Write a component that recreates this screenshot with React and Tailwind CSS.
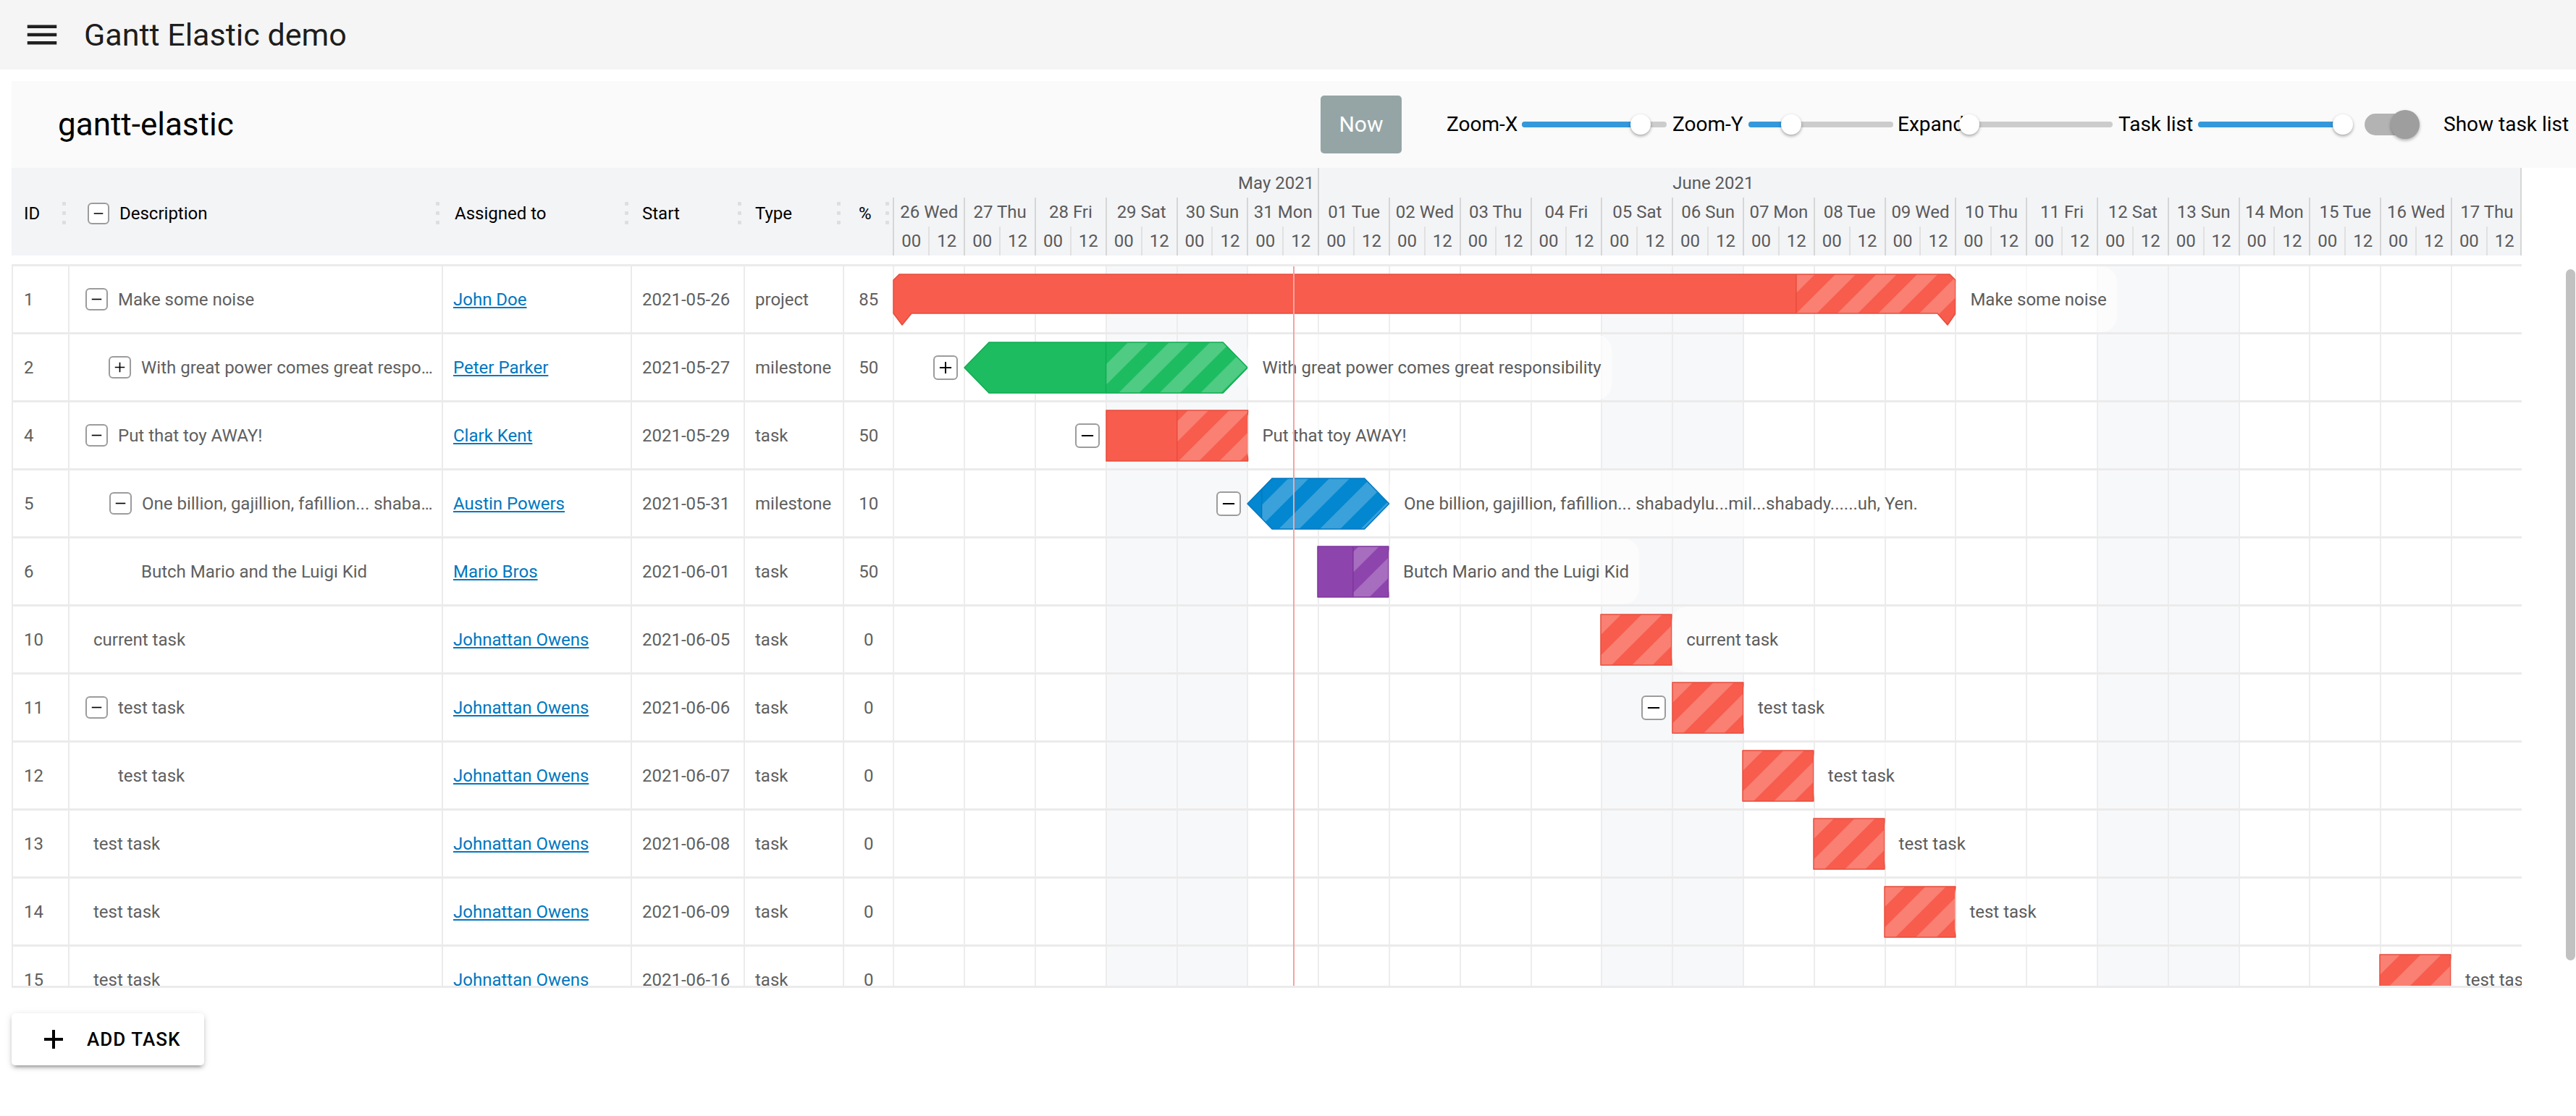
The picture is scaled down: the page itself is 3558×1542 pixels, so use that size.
import React from "react";

const DAY = 97.8;

const days = [
  "26 Wed", "27 Thu", "28 Fri", "29 Sat", "30 Sun", "31 Mon", "01 Tue", "02 Wed",
  "03 Thu", "04 Fri", "05 Sat", "06 Sun", "07 Mon", "08 Tue", "09 Wed", "10 Thu",
  "11 Fri", "12 Sat", "13 Sun", "14 Mon", "15 Tue", "16 Wed", "17 Thu",
];
const weekend = [3, 4, 10, 11, 17, 18];

const RED = { fill: "#F75C4C", stroke: "#E74C3C" };
const GREEN = { fill: "#1EBC61", stroke: "#0EAC51" };
const BLUE = { fill: "#0287D0", stroke: "#0077C0" };
const PURPLE = { fill: "#8E44AD", stroke: "#7E349D" };

const tasks = [
  { id: 1, label: "Make some noise", user: "John Doe", start: "2021-05-26", type: "project", pct: 85, ind: "pl-[22px]", exp: "minus", bar: { day: 0, dur: 15, kind: "project", ...RED } },
  { id: 2, label: "With great power comes great responsibility", user: "Peter Parker", start: "2021-05-27", type: "milestone", pct: 50, ind: "pl-[54px]", exp: "plus", chartExp: "plus", bar: { day: 1, dur: 4, kind: "milestone", ...GREEN } },
  { id: 4, label: "Put that toy AWAY!", user: "Clark Kent", start: "2021-05-29", type: "task", pct: 50, ind: "pl-[22px]", exp: "minus", chartExp: "minus", bar: { day: 3, dur: 2, kind: "task", ...RED } },
  { id: 5, label: "One billion, gajillion, fafillion... shabadylu...mil...shabady......uh, Yen.", user: "Austin Powers", start: "2021-05-31", type: "milestone", pct: 10, ind: "pl-[55px]", exp: "minus", chartExp: "minus", bar: { day: 5, dur: 2, kind: "milestone", ...BLUE } },
  { id: 6, label: "Butch Mario and the Luigi Kid", user: "Mario Bros", start: "2021-06-01", type: "task", pct: 50, ind: "pl-[99px]", bar: { day: 6, dur: 1, kind: "task", ...PURPLE } },
  { id: 10, label: "current task", user: "Johnattan Owens", start: "2021-06-05", type: "task", pct: 0, ind: "pl-[33px]", bar: { day: 10, dur: 1, kind: "task", ...RED } },
  { id: 11, label: "test task", user: "Johnattan Owens", start: "2021-06-06", type: "task", pct: 0, ind: "pl-[22px]", exp: "minus", chartExp: "minus", bar: { day: 11, dur: 1, kind: "task", ...RED } },
  { id: 12, label: "test task", user: "Johnattan Owens", start: "2021-06-07", type: "task", pct: 0, ind: "pl-[67px]", bar: { day: 12, dur: 1, kind: "task", ...RED } },
  { id: 13, label: "test task", user: "Johnattan Owens", start: "2021-06-08", type: "task", pct: 0, ind: "pl-[33px]", bar: { day: 13, dur: 1, kind: "task", ...RED } },
  { id: 14, label: "test task", user: "Johnattan Owens", start: "2021-06-09", type: "task", pct: 0, ind: "pl-[33px]", bar: { day: 14, dur: 1, kind: "task", ...RED } },
  { id: 15, label: "test task", user: "Johnattan Owens", start: "2021-06-16", type: "task", pct: 0, ind: "pl-[33px]", bar: { day: 21, dur: 1, kind: "task", ...RED } },
];

function Expander({ plus, box, mark }) {
  return (
    <span className={`flex shrink-0 items-center justify-center rounded-[6px] border-2 border-[#9c9c9c] bg-white ${box}`}>
      <svg width={mark} height={mark} viewBox="0 0 20 20">
        <path d={plus ? "M1 10H19M10 1V19" : "M1 10H19"} stroke="#000" strokeWidth="2.2" fill="none" />
      </svg>
    </span>
  );
}

function Grip() {
  return (
    <div className="mr-[5px] flex shrink-0 flex-col gap-[8px]">
      <span className="h-[5px] w-[5px] rounded-[1px] bg-[#dedede]" />
      <span className="h-[5px] w-[5px] rounded-[1px] bg-[#dedede]" />
      <span className="h-[5px] w-[5px] rounded-[1px] bg-[#dedede]" />
    </div>
  );
}

function Slider({ className, pos }) {
  return (
    <div className={`relative h-[28px] shrink-0 ${className}`}>
      <div className="absolute left-0 right-0 top-[10px] h-[8px] rounded-full bg-[#cccccc]" />
      <div className="absolute left-0 top-[10px] h-[8px] rounded-l-full bg-[#3498db]" style={{ width: pos }} />
      <div
        className="absolute top-0 h-[28px] w-[28px] rounded-full bg-white shadow-[0_2px_4px_rgba(0,0,0,0.35)]"
        style={{ left: pos - 14 }}
      />
    </div>
  );
}

function Bar({ bar, idx }) {
  const { kind, fill, stroke } = bar;
  const pct = bar.pct;
  const w = bar.dur * DAY;
  const h = 70;
  let d;
  if (kind === "milestone") d = `M34 0 H${w - 34} L${w} 35 L${w - 34} 70 H34 L0 35 Z`;
  else if (kind === "project") d = `M0 8 L8 0 H${w - 8} L${w} 8 V54 L${w - 11} 70 L${w - 25} 54 H25 L12 70 L0 54 Z`;
  else d = `M0 0 H${w} V70 H0 Z`;
  const px = (w * pct) / 100;
  const clip = `bar-clip-${idx}`;
  const pat = `bar-pat-${idx}`;
  return (
    <svg width={w} height={h} viewBox={`0 0 ${w} ${h}`} className="block shrink-0 overflow-visible">
      <defs>
        <clipPath id={clip}>
          <path d={d} />
        </clipPath>
        <pattern id={pat} width="40" height="40" patternUnits="userSpaceOnUse" patternTransform="rotate(45)">
          <rect width="20" height="40" fill="#ffffff" fillOpacity="0.22" />
        </pattern>
      </defs>
      <path d={d} fill={fill} />
      <g clipPath={`url(#${clip})`}>
        <rect x={px} y="0" width={w - px} height={h} fill={`url(#${pat})`} />
        {pct > 0 && <line x1={px} y1="0" x2={px} y2={h} stroke={stroke} strokeWidth="1.5" />}
      </g>
      <path d={d} fill="none" stroke={stroke} strokeWidth="1.5" strokeLinejoin="round" />
    </svg>
  );
}

export default function App() {
  return (
    <div className="min-h-screen w-full overflow-hidden bg-white font-['Roboto',sans-serif] text-black">
      {/* app bar */}
      <header className="flex h-[96px] items-center bg-[#f5f5f5] pl-[31px]">
        <svg width="54" height="54" viewBox="0 0 24 24">
          <path d="M3 18h18v-2H3v2zm0-5h18v-2H3v2zm0-7v2h18V6H3z" fill="rgba(0,0,0,0.87)" />
        </svg>
        <h1 className="ml-[31px] text-[43px] leading-none text-black/90">Gantt Elastic demo</h1>
      </header>

      <div className="pl-[16px] pt-[16px]">
        {/* gantt toolbar */}
        <div className="flex h-[120px] items-center bg-[#fafafa] text-[28px] leading-none">
          <div className="w-[1808px] shrink-0 pl-[64px] text-[44px]">gantt-elastic</div>
          <button className="flex h-[80px] w-[112px] shrink-0 items-center justify-center rounded-[5px] bg-[#95a5a6] text-[30px] text-white">
            Now
          </button>
          <span className="ml-[62px] w-[104px] shrink-0">Zoom-X</span>
          <Slider className="w-[200px]" pos={164} />
          <span className="ml-[8px] w-[105px] shrink-0">Zoom-Y</span>
          <Slider className="w-[200px]" pos={59} />
          <span className="ml-[6px] w-[95px] shrink-0">Expand</span>
          <Slider className="w-[202px]" pos={4} />
          <span className="ml-[8px] w-[110px] shrink-0">Task list</span>
          <Slider className="w-[204px]" pos={200} />
          <div className="relative ml-[26px] h-[40px] w-[80px] shrink-0">
            <div className="absolute left-0 top-[5px] h-[30px] w-[64px] rounded-full bg-[#b3b3b3]" />
            <div className="absolute left-[36px] top-0 h-[40px] w-[40px] rounded-full bg-[#9e9e9e] shadow-[0_2px_4px_rgba(0,0,0,0.3)]" />
          </div>
          <span className="ml-[29px] whitespace-nowrap">Show task list</span>
        </div>

        {/* header */}
        <div className="flex h-[121px] text-[24px]">
          <div className="flex w-[1217.4px] shrink-0 items-center bg-[#f3f4f6] pt-[4px]">
            <div className="flex w-[80px] shrink-0 items-center">
              <span className="flex-1 pl-[17px]">ID</span>
              <Grip />
            </div>
            <div className="flex w-[516px] shrink-0 items-center pl-[25px]">
              <Expander box="h-[30px] w-[30px]" mark={14} />
              <span className="ml-[14px] flex-1">Description</span>
              <Grip />
            </div>
            <div className="flex w-[261px] shrink-0 items-center">
              <span className="flex-1 pl-[16px]">Assigned to</span>
              <Grip />
            </div>
            <div className="flex w-[156px] shrink-0 items-center">
              <span className="flex-1 pl-[14px]">Start</span>
              <Grip />
            </div>
            <div className="flex w-[137px] shrink-0 items-center">
              <span className="flex-1 pl-[14px]">Type</span>
              <Grip />
            </div>
            <div className="flex w-[67.4px] shrink-0 items-center">
              <span className="flex-1 text-center">%</span>
              <Grip />
            </div>
          </div>

          <div className="flex w-[2249.4px] shrink-0 flex-col border-r-2 border-[#d6d6d6] bg-[#f3f4f6] text-[#5a5a5a]">
            <div className="flex h-[41px]">
              <div className="flex w-[586.8px] shrink-0 items-center justify-end pr-[5px]">May 2021</div>
              <div className="flex flex-1 items-center border-l-2 border-[#d6d6d6] pl-[488px]">June 2021</div>
            </div>
            <div className="flex h-[80px]">
              {days.map((d) => (
                <div key={d} className="flex w-[97.8px] shrink-0 flex-col border-l-2 border-[#d6d6d6]">
                  <div className="flex h-[40px] items-center justify-center whitespace-nowrap">{d}</div>
                  <div className="flex h-[40px]">
                    <div className="flex flex-1 items-center justify-center">00</div>
                    <div className="flex flex-1 items-center justify-center border-l-2 border-[#e1e1e1]">12</div>
                  </div>
                </div>
              ))}
            </div>
          </div>
        </div>

        {/* rows */}
        <div className="mt-[12px] flex">
          <div className="flex h-[1000px] overflow-hidden border-y-[3px] border-[#ebebeb] text-[24px]">
            <div className="flex w-[1217.4px] shrink-0 flex-col border-l-2 border-[#ebebeb] text-[#606060]">
              {tasks.map((t) => (
                <div key={t.id} className="flex h-[94px] shrink-0 border-b-[3px] border-[#ebebeb]">
                  <div className="flex w-[78px] shrink-0 items-center border-r-2 border-[#ebebeb] pl-[15px]">{t.id}</div>
                  <div className={`flex w-[516px] shrink-0 items-center border-r-2 border-[#ebebeb] pr-[12px] ${t.ind}`}>
                    {t.exp && <Expander plus={t.exp === "plus"} box="mr-[14px] h-[31px] w-[31px]" mark={15} />}
                    <span className="truncate">{t.label}</span>
                  </div>
                  <div className="flex w-[261px] shrink-0 items-center border-r-2 border-[#ebebeb] pl-[14px]">
                    <a href="#" className="text-[#0077c0] underline">
                      {t.user}
                    </a>
                  </div>
                  <div className="flex w-[156px] shrink-0 items-center border-r-2 border-[#ebebeb] pl-[14px]">{t.start}</div>
                  <div className="flex w-[137px] shrink-0 items-center border-r-2 border-[#ebebeb] pl-[14px]">{t.type}</div>
                  <div className="flex w-[67.4px] shrink-0 items-center justify-center">{t.pct}</div>
                </div>
              ))}
            </div>

            <div className="relative w-[2249.4px] shrink-0 overflow-hidden">
              <div className="absolute inset-0 flex">
                {days.map((d, i) => (
                  <div
                    key={d}
                    className={`h-full w-[97.8px] shrink-0 border-l-2 border-[#ededed] ${weekend.includes(i) ? "bg-[#f7f8fa]" : ""}`}
                  />
                ))}
              </div>
              {tasks.map((t, i) => (
                <div key={t.id} className="relative h-[94px] border-b-[3px] border-[#ebebeb]">
                  <div
                    className="absolute bottom-0 top-0 flex items-center"
                    style={{ left: t.bar.day * DAY + (t.bar.day === 0 ? 1 : 0) - (t.chartExp ? 42 : 0) }}
                  >
                    {t.chartExp && <Expander plus={t.chartExp === "plus"} box="mr-[9px] h-[34px] w-[34px]" mark={18} />}
                    <Bar bar={{ ...t.bar, pct: t.pct }} idx={i} />
                    <div className="flex h-full items-center whitespace-nowrap rounded-[22px] bg-white/60 pl-[20px] pr-[14px] text-[#5c5c5c]">
                      {t.label}
                    </div>
                  </div>
                </div>
              ))}
              <div className="absolute bottom-0 left-[553px] top-0 w-[2px] bg-[#f7a3a3]" />
            </div>
          </div>

          <div className="ml-[61px] pt-[7px]">
            <div className="h-[955px] w-[13px] rounded-[7px] bg-[#c1c1c1]" />
          </div>
        </div>

        <button className="mt-[35px] flex h-[72px] w-[266px] items-center rounded-[5px] bg-white pl-[44px] shadow-[0_7px_3px_-5px_rgba(0,0,0,0.2),0_4px_5px_0_rgba(0,0,0,0.14),0_2px_11px_0_rgba(0,0,0,0.12)]">
          <svg width="28" height="28" viewBox="0 0 28 28">
            <path d="M14 1V27M1 14H27" stroke="#000" strokeWidth="4" fill="none" />
          </svg>
          <span className="ml-[32px] text-[26px] font-medium tracking-[0.04em] text-black">ADD TASK</span>
        </button>
      </div>
    </div>
  );
}
